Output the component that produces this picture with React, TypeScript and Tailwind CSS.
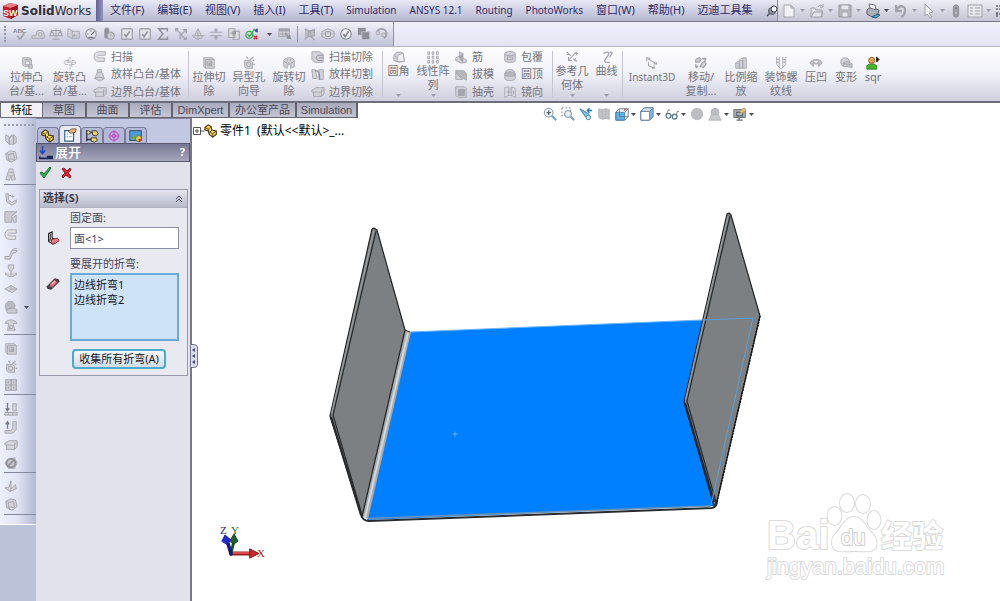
import React from "react";

type Glyph = React.ReactNode;

const G = "#a3a4ab";
const F = "#d2d2d8";

const glyphs: Record<string, Glyph> = {
  abc: (
    <>
      <text x="0" y="6.500" fontSize="7" fontFamily="Liberation Sans" fontWeight="bold" fill="#85868e" stroke="none">ABC</text>
      <path d="M5 10l3 4 5-7" strokeWidth="2" />
    </>
  ),
  tape: <><path d="M1 13h14v-5a4 4 0 0 0-4-4H9a3 3 0 0 0-3 3v3H1z" fill={F} /><circle cx="10.500" cy="8.500" r="2" /></>,
  scale: <path d="M8 2v12M3 4h10M1 10l2-6 3 6H1zM10 10l3-6 2 6h-5zM4 14h8" strokeWidth="1.300" />,
  section: <><path d="M1 2l5 2v9l-5-2zM6 5h8v8H6" fill={F} /><path d="M9 8l-2 2 2 2M7 10h5" /></>,
  gauge: <><circle cx="8" cy="8" r="6" fill="#e4e4ec" strokeWidth="1.500" /><path d="M8 9l4-4M4 8h1M8 4v1M5 12h6" strokeWidth="1.500" stroke="#777983" /></>,
  sensor: <><rect x="3" y="1" width="5" height="12" rx="2" fill="#8f9098" /><circle cx="10" cy="10" r="4" fill={F} strokeWidth="1.500" /><path d="M10 8v2h2" /></>,
  checkbox: <><rect x="2" y="2" width="12" height="12" rx="1" fill="#e4e4ea" strokeWidth="1.500" /><path d="M5 8l2 3 4-6" strokeWidth="2" stroke="#93959d" /></>,
  sigma: <path d="M13 5V2H3l5 6-5 6h10v-3" strokeWidth="1.700" stroke="#8f9099" />,
  branch: <path d="M2 2l5 5v7M14 3L7 10M10 3h4v4M2 5V2h3M8 9l5 5M11 14h3v-3" strokeWidth="1.500" />,
  cone: <path d="M8 2L3 12l5 2 5-2zM8 2v12M1 10h14" fill={F} />,
  align: <path d="M1 6h14M1 10h14M8 1v4M6 3l2 2 2-2M8 15v-4M6 13l2-2 2 2" strokeWidth="1.300" />,
  copy: <><path d="M2 2h7v10H2zM7 5h7v9H7z" fill="#dedee4" strokeWidth="1.300" /><path d="M4 7h6M8 5l2 2-2 2" stroke="#83858d" /></>,
  table: <><path d="M1 2h12v9H1z" fill={F} /><path d="M1 3.500h12" strokeWidth="3" /><path d="M1 8h12M5 5v6M9 5v6" /><path d="M8 7l6 6M13 9l1 4-4-1" strokeWidth="1.500" stroke="#8c8d96" /></>,
  greencheck: (
    <>
      <circle cx="5" cy="9" r="4" stroke="#35ad4b" strokeWidth="1.500" />
      <path d="M3 8l2 3 6-9" stroke="#35ad4b" strokeWidth="1.500" />
      <path d="M11 4l3-2v4z" fill="#3947a5" stroke="#3947a5" />
      <path d="M10 10l4 4M14 10l-4 4" stroke="#dc2c47" strokeWidth="1.800" />
    </>
  ),
  flow: <><path d="M2 2l4 2v7l-4 3M6 5l7-2v7l-7 1M9 5v6l4 4" fill="#bcbdc4" strokeWidth="1.400" /></>,
  eye: <><path d="M1 5l7-3 7 3v6l-7 3-7-3z" fill="#d5d6dd" /><circle cx="8" cy="8" r="3" strokeWidth="1.300" /><path d="M1 8h3M12 8h3" /></>,
  okcircle: <><circle cx="8" cy="8" r="6" fill="#ececf2" strokeWidth="1.300" stroke="#85868e" /><path d="M5 8l2 3 4-6" strokeWidth="2" stroke="#85868e" /></>,
  squares: <><path d="M1 1h9v8H1z" fill="#8d8e97" stroke="none" /><path d="M5.500 5.500h9v9h-9z" fill="#8d8e97" stroke="#c5c6d0" /></>,
  swirl: <><path d="M2 6c2-5 9-5 11 0 1 3 0 5-3 7" strokeWidth="2" /><path d="M1 6l3-2 2 4-4 1zM8 7h4v4H8z" fill={F} /></>,
  extrude: <><path d="M3 2h8l2 2v8H5L3 10z" fill={F} /><path d="M5 4h8M6 6h5v4H6z" fill="#eee" /><path d="M10 10h4v4h-4z" fill="#cfcfd5" /></>,
  revolve: <><path d="M8 1v14" strokeDasharray="3 1" /><path d="M6 5C0 5 0 10 6 10M10 5c6 0 6 5 0 5M6 3v4M10 8v4M4 7h3M9 7h4" /></>,
  sweep: <path d="M14 2H6C-1 3 0 13 6 13h7V9H7C4 9 4 6 7 6h7z" fill="#e2e2e6" />,
  loft: <path d="M5 2h5v3l3 7-5 3-6-3 3-7zM5 5h5M2 12c3-2 7-2 11 0" fill={F} />,
  boundary: <path d="M1 6l5-3h9v7l-3 3H3V8H1zM3 8h9V5M12 8v5M12 8l3-3" fill={F} />,
  cut: <><path d="M2 2h10l2 2v10H4l-2-2z" fill={F} /><path d="M4 4h10M4 4v10M6 6h5v5H6z" /><path d="M8 8h3v3H8z" fill="#aaa" /></>,
  hole: <><path d="M3 5h7l2 2v7H5l-2-2z" fill={F} /><circle cx="7.500" cy="9.500" r="2.500" /><path d="M9 5l4-4M12 5h2M5 1l2 2M13 9l2 1" strokeWidth="1.500" /></>,
  revcut: <><path d="M2 5c2-4 10-4 12 0v7l-4 2v-4H6v4l-4-2z" fill={F} /><path d="M2 6c3 3 9 3 12 0M6 6V3M10 6V3" /></>,
  sweepcut: <><path d="M1 2h9l4 3v9H4l-3-3z" fill={F} /><path d="M14 6H9C5 6 5 12 9 12h4M14 9H9" stroke="#8c8d95" /></>,
  loftcut: <><path d="M1 2h4l2 10H2zM9 2h5v11H9z" fill={F} /><path d="M5 3c4 0 5 3 5 10" stroke="#888992" strokeWidth="1.500" /></>,
  fillet: <><path d="M2 12V7c1-5 8-6 11-3l1 9-6 1z" fill={F} /><path d="M6 13V9c1-4 5-5 7-5l1 9z" fill="#f1f1f4" /><path d="M6 9L3 6" /></>,
  pattern: <path d="M2 2h2v3H2zM7 2h2v3H7zM12 2h2v3h-2zM2 7h2v3H2zM7 7h2v3H7zM12 7h2v3h-2zM2 12h2v3H2zM7 12h2v3H7zM12 12h2v3h-2z" fill="#e9e9ee" />,
  rib: <><path d="M6 2l4 2v5l4 2v3l-6 1-6-3V9l4-2z" fill={F} /><path d="M6 8l4 6V4z" fill="#a5a6ac" /></>,
  draft: <><path d="M2 3h9l3 3v8L2 6z" fill="#b6b7bd" /><path d="M2 6v7h8z" fill={F} /></>,
  shell: <><path d="M2 2h10l2 2v10H4l-2-2z" fill={F} /><rect x="5" y="5" width="7" height="7" fill="#a5a6ad" /></>,
  wrap: <><path d="M2 4c0-3 12-3 12 0v8c0 3-12 3-12 0z" fill={F} /><path d="M2 5c2 2 10 2 12 0M5 8h6v3H5z" /></>,
  dome: <><path d="M2 7c0-7 12-7 12 0v5c0 3-12 3-12 0z" fill={F} /><ellipse cx="8" cy="7" rx="6" ry="2.500" fill="#b6b7be" /></>,
  mirror: <path d="M2 3l4-1v10l-4 2zM10 2l4 2v10l-4-2zM6 12h4M8 2v8M4 8h4M12 6v5" fill="#e1e1e6" />,
  refgeo: <path d="M2 2l5 5M2 6l2-2M13 2L4 12M4 8v4h4M9 10l5 3M12 9l-1 4M11 4h4M13 2v4" strokeWidth="1.200" />,
  curve: <path d="M4 4c6-4 8 0 3 5-3 4-2 6 4 5M11 3c4-2 3 2 0 5" strokeWidth="1.500" />,
  instant: <path d="M2 6V2l4 1M3 3l10 6v-2M13 9h-3M4 7v4l7 3M11 14l-1-3M11 14l-3 0" strokeWidth="1.200" />,
  move: <path d="M2 4l4-2 2 2-2 3H2zM9 8l3-2 2 3-3 4-4-1zM9 3h4v3M12 2l2 2M2 9v3h3M2 14l2-2" fill={F} strokeWidth="1.300" />,
  scalebox: <path d="M2 8h4v6H2zM6 5h4v9H6zM10 2h4v12h-4zM2 8l2-2h2M6 5l2-2h2" fill={F} />,
  thread: <path d="M3 1v9M6 1v12M10 1v12M13 1v9M3 10l5 5 5-5M3 4h3M10 4h3M3 7h3M10 7h3" />,
  indent: <path d="M1 8c2-5 12-6 14 0l-4 4v-3H5v3zM5 6l3 3 3-3" fill="#bfc0c6" />,
  deform: <><circle cx="7" cy="7" r="5" fill={F} /><path d="M5 12V8l5-2 5 3v4zM5 8l5 2 5-1" fill="#c4c5cb" /></>,
  person: <><path d="M1 15V11l3-2h5l3 2v4z" fill="#46b52c" stroke="#2a7c20" /><circle cx="6.500" cy="5" r="3.500" fill="#e9a24c" stroke="#8a5b24" /><path d="M12 1l3 3-3 3z" fill="#222" stroke="#222" /></>,
  page: <path d="M3 2h7l3 3v9H3zM10 2v3h3" fill="#f2f2f7" />,
  open: <path d="M2 14V5h4l1 2h6v7zM2 14l3-5h9l-2 5M9 4c2-3 4-2 5 0M14 1v3h-3" fill="#e2e2ea" />,
  save: <><path d="M2 2h12v12H2z" fill="#b8b9c2" stroke="#93949e" /><path d="M4 2h8v5H4zM5 9h6v5H5z" fill="#e6e6ed" /></>,
  print: <><path d="M2 7l4-3 8 3-1 4-6 3-5-3z" fill="#aeb1ba" stroke="#53596a" /><path d="M4 1l6 1 1 5-6-2z" fill="#fff" stroke="#656e85" /><path d="M7 14l4 1 4-3-3-1z" fill="#55aaca" stroke="#235f87" /></>,
  undo: <path d="M3 2v6h6M3 7c4-6 10-4 9 1 0 3-2 5-4 6" strokeWidth="2.300" />,
  cursor: <path d="M4 1l8 8-4 1 3 4-2 1-3-4-2 2z" fill="#eee" />,
  light: <><rect x="5" y="1" width="6" height="14" rx="3" fill="#9b9ca5" stroke="#888a94" /><circle cx="8" cy="5" r="1.500" fill="#777983" /><circle cx="8" cy="10" r="1.500" fill="#c5c6cd" /></>,
  list: <><rect x="1" y="2" width="14" height="12" fill="#e8e8ef" /><path d="M3 5h3M3 8h3M3 11h3M8 5h5M8 8h5M8 11h5" /></>,
  zoomfit: <><path d="M10 10l5 5" stroke="#7aa6d6" strokeWidth="2.500" /><circle cx="6.500" cy="6.500" r="5" fill="#edf4f8" stroke="#7c8794" /><path d="M4 6.500h5M6.500 4v5" stroke="#546070" strokeWidth="1.500" /></>,
  zoomarea: <><path d="M1 1h10v9H1z" strokeDasharray="2 2" stroke="#727a87" /><path d="M11 11l4 4" stroke="#7aa6d6" strokeWidth="2.500" /><circle cx="8" cy="8" r="4" fill="#e6eff5" stroke="#77828f" /></>,
  prevview: <><path d="M1 2l7 10 4 2 1-3-3-4z" fill="#7bc3e8" stroke="#39729c" /><path d="M15 4H10M12 1.500L9.500 4 12 6.500" stroke="#1e7cb9" strokeWidth="1.500" /><circle cx="10.500" cy="12" r="2.500" fill="#d3f1fd" stroke="#4b88aa" /></>,
  sectionv: <path d="M2 2l4 1 4-1 4 1v11l-4-1-4 1-4-2zM6 3v11M10 2v11" fill="#c2c3c8" stroke="#b0b1b7" />,
  orient: <><path d="M1 6l4-4h10v9l-4 4H1z" fill="#fff" stroke="#5c6877" /><path d="M1 6h10v9H1z" fill="#5fb2e6" stroke="#467da2" /><path d="M11 6l4-4M5 2v4M5 6v5h6M11 11h4" stroke="#69727e" /><path d="M10 4l3-2" stroke="#b35b62" strokeWidth="1.500" /></>,
  cube: <><path d="M1 5l4-4h10v10l-4 4H1z" fill="#81b9e7" stroke="#506f9f" /><path d="M1 5l4-4h10l-4 4z" fill="#d7ebfb" stroke="#607796" /><path d="M1 5h10v10H1z" fill="#fff" stroke="#647790" /></>,
  glasses: <><circle cx="4" cy="10" r="2.700" stroke="#5e7f90" strokeWidth="1.500" /><circle cx="11" cy="11" r="2.700" stroke="#5e7f90" strokeWidth="1.500" /><path d="M2 8l2-5 2 1M13 9l1-4 2 0M6.500 10h2" stroke="#637782" /></>,
  ball: <circle cx="8" cy="8" r="6.500" fill="#bdbec2" stroke="#b5b6ba" />,
  scene: <><circle cx="8" cy="6" r="4.500" fill="#bdbec2" stroke="#b0b1b7" /><path d="M1 15l3-6h8l3 6z" fill="#c8c9cd" stroke="#b0b1b7" /></>,
  monitor: <><rect x="1" y="3" width="13" height="9" fill="#aeb9b7" stroke="#606467" /><path d="M4 6h7v4H4zM4 15h7M7 12v3" stroke="#686d72" strokeWidth="1.500" /><path d="M7 5l6-4 2 3-5 3z" fill="#eac181" stroke="#b8935e" /></>,
  part: <><path d="M1 4l4-3 3 2 1 4 5 1v4l-4 3-4-3-1-4-4-1z" fill="#ffd956" stroke="#3e3518" strokeWidth="1.300" /><path d="M1 4l4 2 3-3M5 6v3M9 7l-2 2M10 11l4-3M10 11v4M6 9l4 2" stroke="#493d19" /></>,
  props: <><path d="M2 3h10v12H2z" fill="#fff" stroke="#326384" strokeWidth="1.300" /><path d="M4 7h2M4 10h2M7 10h3" stroke="#5c9dc0" /><path d="M6 4l4-3h5l-1 4-5 1z" fill="#f0b36c" stroke="#775027" /></>,
  config: <><path d="M2 1v13M2 4h6M2 12h6" stroke="#333" strokeWidth="1.500" /><circle cx="4" cy="4" r="2" fill="#dfd9ac" stroke="#4f4828" /><path d="M8 2h5l2 3-2 3-4-1zM7 10h6l1 3-3 2-4-1z" fill="#ead069" stroke="#3c3827" /></>,
  target: <><circle cx="8" cy="8" r="5" stroke="#c44fc8" strokeWidth="1.500" /><circle cx="8" cy="8" r="2" stroke="#ba3fbd" /><path d="M8 1v14M1 8h14" stroke="#c856cb" strokeWidth="1.300" /></>,
  picture: <><rect x="1" y="2" width="13" height="11" fill="#4f9dd8" stroke="#273e57" /><path d="M2 11l4-4 3 3v2H2z" fill="#5faf52" stroke="none" /><circle cx="11" cy="11" r="3.500" fill="#e5d149" stroke="#5b6337" /><path d="M11 11h3.500a3.500 3.500 0 0 1-3.500 3.500z" fill="#cf3434" stroke="none" /></>,
  unfold: <><path d="M4 0v8M1 5l3 4 3-4" stroke="#2242b5" strokeWidth="1.700" /><path d="M1 12v2h14v-2h-5v2" stroke="#182757" strokeWidth="2" /></>,
  face: <><path d="M3 3l4-2v7l5 2v3l-4 2-5-3z" fill="#f4f4f4" stroke="#222" strokeWidth="1.300" /><path d="M3 4v7M5 3v7l-2 1M5 10l3 3" stroke="#222" /><path d="M6 10l7-2 2 3-6 4-3-2z" fill="#e77c85" stroke="#9d2734" /></>,
  bend: <><path d="M1 11l9-9 4 1 1 2-9 9-4-1z" fill="#46474f" stroke="#25262b" /><path d="M4 8l6-5 3 3-6 6-2-1z" fill="#e47580" stroke="#863740" /><path d="M7 8l3-3" stroke="#f6c0c5" strokeWidth="1.500" /></>,
  bend1: <path d="M2 3l4 3v8l-4-4zM6 8l3-5 2 5v6l-5 0zM11 3l3 3v6l-3 2z" fill={F} />,
  bend2: <path d="M2 4l5-3 6 1 2 8-6 4-6-3zM5 5l6-1 1 7-7-1zM7 14l-2-4M5 5L2 4" fill={F} />,
  bend3: <path d="M6 1h4l3 12-4 1-1-4-2 4-4-1zM6 5h4M5 9h6" fill={F} />,
  flange: <path d="M2 2h3v7l4 3 5-3v3l-5 3-6-4zM5 4h3M10 3v4M8 5h4" fill={F} />,
  miter: <><path d="M1 2h14L9 7v7H1z" fill="#c9c9cf" /><path d="M10 9l4-3v8h-3z" fill={F} /></>,
  jog: <path d="M1 12h5l3-7h6l-2 3h-3l-3 7H1zM9 5l2-2h4" fill={F} />,
  sketchb: <path d="M5 1h6v4L8 9 5 5zM8 9v4M2 10c0 6 12 6 12 0M2 10v3M14 10v3" fill={F} />,
  cross: <path d="M1 8l7-4 7 4-6 4zM8 4v4l-3 3M8 8h7" fill={F} />,
  form: <><circle cx="7" cy="7" r="5.500" fill="#b9bac0" /><path d="M2 11l8-2 5 2v4H4z" fill="#c9cad0" /></>,
  vent: <path d="M1 6c2-5 12-5 14 0H11v3l2 5H4l1-5V6zM6 9h4v3H6z" fill={F} />,
  grid: <><path d="M2 2h12v12H2z" fill={F} strokeWidth="1.400" /><path d="M2 8h12M8 2v12" strokeWidth="1.400" /><path d="M4 5h2M10 5h2M4 11h2M10 11h2M5 4v2M11 4v2M5 10v2M11 10v2" /></>,
  foldd: <><path d="M4 1v8M2 7l2 3 2-3" stroke="#777982" strokeWidth="1.500" /><path d="M1 12h14v3H1zM10 2h4v8h-4zM5 12v3M10 12v3" fill={F} /></>,
  foldu: <><path d="M4 10V2M2 5l2-3 2 3" stroke="#777982" strokeWidth="1.500" /><path d="M1 12h7l2-3V2h4v9l-4 4H1z" fill={F} /></>,
  nobend: <><path d="M1 8l3-4 8-2 3 6-3 6H5z" fill="#c4c5cb" /><circle cx="8" cy="8" r="5" strokeWidth="1.800" stroke="#8f9098" /><path d="M5 11l6-6" stroke="#8f9098" strokeWidth="1.800" /></>,
  rip: <path d="M1 9l6 4 7-3-1-5-5 5V1L6 8zM7 13l1-3" fill={F} />,
};

function Icon({ name, className = "size-3.5" }: { name: string; className?: string }) {
  return (
    <svg viewBox="0 0 16 16" className={`shrink-0 ${className}`} fill="none" stroke={G} strokeWidth="1" aria-hidden="true">
      {glyphs[name]}
    </svg>
  );
}

function Arrow({ dark = false, className = "" }: { dark?: boolean; className?: string }) {
  return (
    <svg viewBox="0 0 5 3" className={`h-[3px] w-[5px] shrink-0 ${className}`} aria-hidden="true">
      <path d="M0 0h5L2.500 3z" fill={dark ? "#4b4c58" : "#9a9aa8"} />
    </svg>
  );
}

const menus = ["文件(F)", "编辑(E)", "视图(V)", "插入(I)", "工具(T)", "Simulation", "ANSYS 12.1", "Routing", "PhotoWorks", "窗口(W)", "帮助(H)", "迈迪工具集"];

function TitleBar() {
  return (
    <header className="flex h-[22px] items-stretch border-b border-[#777886] bg-gradient-to-b from-[#eeeef6] to-[#c5c5d4]">
      <div className="flex w-24 items-center gap-0.5 bg-gradient-to-b from-[#f3f3fa] to-[#c9c9dc] pl-0.5">
        <svg viewBox="0 0 17 17" className="size-[17px] shrink-0" aria-hidden="true">
          <path d="M1 4l7-3 8 2v10l-7 4-8-3z" fill="#c3202b" />
          <path d="M1 4l7-3 8 2-7 3z" fill="#ea7b7f" />
          <path d="M9 6l7-3v10l-7 4z" fill="#98131d" />
          <text x="1" y="13.500" fontFamily="Liberation Sans" fontSize="9" fontWeight="bold" fill="#fff">SW</text>
        </svg>
        <div className="font-['DejaVu_Sans',sans-serif] text-[12px] text-[#303038]"><b>Solid</b>Works</div>
      </div>
      <div className="w-[7px] bg-gradient-to-r from-[#62629a] to-[#9494b8]" />
      <nav className="flex w-[675px] items-center gap-[13px] border-r border-[#8a8a9a] bg-gradient-to-b from-[#e8e8f5] via-[#cfcfe4] to-[#b7b7ce] pl-[7px] text-[11px] text-[#2c2c66]">
        {menus.map((m) => (
          <button key={m} type="button" className={/^[A-Z]/.test(m) ? "text-[10px] whitespace-nowrap" : "whitespace-nowrap"}>{m}</button>
        ))}
        <svg viewBox="0 0 12 12" className="size-3 shrink-0" aria-hidden="true">
          <path d="M1 11l4-4" stroke="#444655" strokeWidth="1.500" />
          <circle cx="6" cy="6" r="3.500" fill="#8f909e" stroke="#555766" />
          <circle cx="8" cy="4" r="3" fill="#f5f5fa" stroke="#444655" />
        </svg>
      </nav>
      <div className="flex flex-1 items-center overflow-hidden pl-[3px]">
        {["page", "open", "save", "print", "undo", "cursor"].map((n) => (
          <button key={n} type="button" aria-label={n} className="flex w-7 shrink-0 items-center gap-[3px]">
            <Icon name={n} className="size-4" />
            <Arrow dark={n === "print"} />
          </button>
        ))}
        <button type="button" aria-label="light" className="w-[18px] shrink-0"><Icon name="light" /></button>
        <button type="button" aria-label="list" className="flex w-7 shrink-0 items-center gap-[3px]"><Icon name="list" className="size-4" /><Arrow /></button>
        <svg viewBox="0 0 8 16" className="h-4 w-2 shrink-0" aria-hidden="true"><path d="M1 3h7M1 6h7M2 9v5M5 9l3 5M1 11h4" stroke="#333" fill="none" strokeDasharray="2 1" /></svg>
      </div>
    </header>
  );
}

const quickA = ["abc", "tape", "scale", "section", "gauge", "sensor", "checkbox", "checkbox", "sigma", "branch", "cone", "align", "copy", "greencheck"];
const quickB = ["flow", "eye", "okcircle", "squares", "swirl"];

function ToolStrip() {
  return (
    <div className="flex h-[25px] items-stretch border-b border-[#b3b3c4] bg-gradient-to-b from-[#f0f0fa] to-[#e3e3f2]">
      <div className="flex w-[394px] items-center border-r border-[#8e8fa4] bg-gradient-to-b from-[#f2f2fb] via-[#d9d9e9] to-[#bfc1d6] pl-1">
        <div className="h-4 border-l-2 border-dotted border-[#9697ab]" />
        <div className="ml-[7px] flex w-[246px] justify-between">
          {quickA.map((n, i) => <button key={i} type="button" aria-label={n} className="w-3.5"><Icon name={n} /></button>)}
        </div>
        <Arrow dark className="ml-2" />
        <button type="button" aria-label="table" className="ml-1.5"><Icon name="table" /></button>
        <div className="mx-[5px] h-4 w-px bg-[#8f90a0]" />
        <div className="flex w-[86px] justify-between">
          {quickB.map((n) => <button key={n} type="button" aria-label={n} className="w-3.5"><Icon name={n} /></button>)}
        </div>
      </div>
    </div>
  );
}

function Big({ icon, lines, w, arrow = false, top = false }: { icon: string; lines: string[]; w: string; arrow?: boolean; top?: boolean }) {
  return (
    <button type="button" className={`relative flex h-full shrink-0 flex-col items-center leading-[14px] ${top ? "pt-[3px]" : "pt-[9px]"} ${w}`}>
      <Icon name={icon} />
      {lines.map((l) => <span key={l} className={/^[A-Z]/.test(l) ? "text-[10px] whitespace-nowrap" : "whitespace-nowrap"}>{l}</span>)}
      {arrow && <Arrow className="absolute bottom-1" />}
    </button>
  );
}

function Stack({ items, w }: { items: [string, string][]; w: string }) {
  return (
    <div className={`flex shrink-0 flex-col pt-px pl-0.5 ${w}`}>
      {items.map(([icon, label]) => (
        <button key={label} type="button" className="flex h-[18px] items-center gap-1 whitespace-nowrap">
          <Icon name={icon} />{label}
        </button>
      ))}
    </div>
  );
}

const Rule = () => <div className="my-1 w-px shrink-0 bg-[#c5c5d2]" />;

function Ribbon() {
  return (
    <div className="flex h-14 items-stretch border-b-2 border-[#6d6d7c] bg-gradient-to-b from-[#fefeff] via-[#f1f1f9] to-[#cfcfde] pl-[5px] text-[11px] text-[#73747c]">
      <Big icon="extrude" lines={["拉伸凸", "台/基..."]} w="w-[43px]" />
      <Big icon="revolve" lines={["旋转凸", "台/基..."]} w="w-[43px]" />
      <Stack items={[["sweep", "扫描"], ["loft", "放样凸台/基体"], ["boundary", "边界凸台/基体"]]} w="w-[97px]" />
      <Rule />
      <Big icon="cut" lines={["拉伸切", "除"]} w="w-10" />
      <Big icon="hole" lines={["异型孔", "向导"]} w="w-10" />
      <Big icon="revcut" lines={["旋转切", "除"]} w="w-10" />
      <Stack items={[["sweepcut", "扫描切除"], ["loftcut", "放样切割"], ["boundary", "边界切除"]]} w="w-[73px]" />
      <Rule />
      <Big icon="fillet" lines={["圆角"]} w="w-[31px]" arrow top />
      <Big icon="pattern" lines={["线性阵", "列"]} w="w-[38px]" arrow top />
      <Stack items={[["rib", "筋"], ["draft", "拔模"], ["shell", "抽壳"]]} w="w-[49px]" />
      <Stack items={[["wrap", "包覆"], ["dome", "圆顶"], ["mirror", "镜向"]]} w="w-[51px]" />
      <Rule />
      <Big icon="refgeo" lines={["参考几", "何体"]} w="w-[38px]" arrow top />
      <Big icon="curve" lines={["曲线"]} w="w-[31px]" arrow top />
      <Rule />
      <Big icon="instant" lines={["Instant3D"]} w="w-[58px]" />
      <Big icon="move" lines={["移动/", "复制..."]} w="w-10" />
      <Big icon="scalebox" lines={["比例缩", "放"]} w="w-10" />
      <Big icon="thread" lines={["装饰螺", "纹线"]} w="w-10" />
      <Big icon="indent" lines={["压凹"]} w="w-[30px]" />
      <Big icon="deform" lines={["变形"]} w="w-[30px]" />
      <Big icon="person" lines={["sqr"]} w="w-6" />
    </div>
  );
}

const tabs: [string, string][] = [
  ["草图", "w-[44px]"], ["曲面", "w-[43px]"], ["评估", "w-[43px]"], ["DimXpert", "w-[57px]"], ["办公室产品", "w-[67px]"], ["Simulation", "w-[61px]"],
];
const views: [string, boolean][] = [
  ["zoomfit", false], ["zoomarea", false], ["prevview", false], ["sectionv", false], ["orient", true], ["cube", true], ["glasses", true], ["ball", false], ["scene", true], ["monitor", true],
];

function TabRow() {
  return (
    <div className="flex h-[15px] items-start">
      <div role="tablist" className="flex h-[15px] font-['Liberation_Sans','Noto_Sans_CJK_SC',sans-serif] text-[11px] leading-[13px] text-[#4a4a55]">
        <button role="tab" type="button" aria-selected="true" className="w-[43px] border-x border-b border-[#6d6d7c] bg-[#f1f1f7] text-black">特征</button>
        {tabs.map(([t, w]) => (
          <button key={t} role="tab" type="button" aria-selected="false" className={`border-r-2 border-b border-[#62636f] bg-gradient-to-b from-[#a9abbe] to-[#c5c6d4] whitespace-nowrap ${w}`}>{t}</button>
        ))}
      </div>
      <div className="mt-1 ml-[185px] flex gap-1">
        {views.map(([n, a]) => (
          <button key={n} type="button" aria-label={n} className="flex items-center gap-0.5">
            <Icon name={n} />{a && <Arrow dark />}
          </button>
        ))}
      </div>
    </div>
  );
}

const sideGroups = [
  ["bend1", "bend2", "bend3"],
  ["flange", "miter", "sweep", "jog", "sketchb", "cross", "form", "vent"],
  ["cut", "hole", "grid"],
  ["foldd", "foldu", "boundary", "nobend"],
  ["rip", "bend2"],
];

function SideStrip() {
  return (
    <div className="w-9 shrink-0 bg-[#bcc2d8]">
      <div className="border-b border-white bg-gradient-to-r from-[#edf0fd] via-[#dfe3f4] to-[#b3b9d1] pt-1.5 pb-1 pl-1">
        <div className="mb-1 w-[30px] border-t-2 border-dotted border-[#9a9cb2]" />
        {sideGroups.map((g, i) => (
          <div key={i} className="mb-[5px] border-b border-[#85889d]">
            {g.map((n, j) => (
              <button key={j} type="button" aria-label={n} className="flex h-[18px] w-full items-center gap-1.5">
                <Icon name={n} />{n === "form" && <Arrow dark />}
              </button>
            ))}
          </div>
        ))}
      </div>
    </div>
  );
}

function PropertyPanel() {
  return (
    <aside className="relative w-[156px] shrink-0 border-t border-r-2 border-t-[#8788a0] border-r-[#77788a] bg-[#e2e2ed] text-[11px] text-[#45465c]">
      <div className="flex h-6 items-end bg-[#c3c8e2] pl-px">
        {["part", "props", "config", "target", "picture"].map((n) => (
          <button key={n} type="button" aria-label={n} className={`flex w-[22px] items-center justify-center rounded-t border border-b-0 border-[#777b99] ${n === "props" ? "h-[18px] bg-[#e9eaf4]" : "h-4 bg-[#b3b9d6]"}`}>
            <Icon name={n} />
          </button>
        ))}
      </div>
      <div className="flex h-[19px] items-center border border-[#57586e] bg-gradient-to-b from-[#777893] to-[#a5a6bc] pr-1 pl-0.5 text-white">
        <Icon name="unfold" />
        <span className="ml-0.5 flex-1 text-[13px] font-medium">展开</span>
        <button type="button" aria-label="帮助" className="font-bold">?</button>
      </div>
      <div className="flex h-[27px] items-start gap-2 pt-1 pl-[3px]">
        <button type="button" aria-label="确定">
          <svg viewBox="0 0 13 13" className="size-[13px]"><path d="M1 7l2-1 2 2 6-7 1 1-7 10z" fill="#32b24a" stroke="#18722b" /></svg>
        </button>
        <button type="button" aria-label="取消">
          <svg viewBox="0 0 13 13" className="size-[13px]"><path d="M2 3l2-1 3 3 3-3 1 2-3 3 3 3-1 2-4-3-3 3-1-2 3-3z" fill="#dd2432" stroke="#8c1c27" /></svg>
        </button>
      </div>
      <section className="mr-0.5 ml-[3px] border border-[#989aab] bg-[#e9e9f2] pb-1.5">
        <h2 className="flex h-[18px] items-center justify-between border-b border-[#b1b2c1] bg-gradient-to-b from-[#e5e5ee] to-[#b7bac9] pr-1 pl-[3px] font-bold text-[#3b3c4e]">
          选择(S)
          <svg viewBox="0 0 8 8" className="size-2" aria-hidden="true"><path d="M1 4l3-3 3 3M1 7l3-3 3 3" fill="none" stroke="#454657" /></svg>
        </h2>
        <div className="pt-px pr-2 pl-[30px]">
          <label htmlFor="fixed" className="flex h-[18px] items-center">固定面:</label>
          <div className="-ml-6 flex items-center gap-2.5">
            <Icon name="face" />
            <input id="fixed" defaultValue="面<1>" className="h-[22px] w-full min-w-0 border border-[#8e90a4] bg-white px-[3px] text-[11px]" />
          </div>
          <label htmlFor="bends" className="mt-1.5 flex h-[18px] items-center">要展开的折弯:</label>
          <div className="-ml-6 flex items-start gap-2.5">
            <Icon name="bend" className="mt-1 size-3.5" />
            <select id="bends" multiple size={4} className="h-[68px] w-full min-w-0 appearance-none overflow-hidden border-2 border-[#67acd9] bg-[#cfe3f8] bg-none p-0 pt-px text-[11px] text-[#16171f] outline-none">
              <option className="h-[15px] min-h-0 px-0.5 py-0 leading-[15px]">边线折弯1</option>
              <option className="h-[15px] min-h-0 px-0.5 py-0 leading-[15px]">边线折弯2</option>
            </select>
          </div>
          <button type="button" className="mt-2 ml-0.5 flex h-5 w-[94px] items-center justify-center rounded-sm border-2 border-[#4eaac6] bg-gradient-to-b from-[#f4f8fb] to-[#cfdde8] whitespace-nowrap text-[#16171f]">收集所有折弯(A)</button>
        </div>
      </section>
      <button type="button" aria-label="折叠面板" className="absolute top-[225px] -right-[8px] z-10 h-6 w-2 rounded-r border border-[#77788c] bg-[#d9daea]">
        <svg viewBox="0 0 6 22" className="h-[22px] w-1.5" aria-hidden="true"><path d="M4 3v4L1 5zM4 9v4l-3-2zM4 15v4l-3-2z" fill="#45467a" /></svg>
      </button>
    </aside>
  );
}

function Model() {
  return (
    <svg viewBox="192 118 808 483" className="block h-[483px] w-[808px]" role="img" aria-label="钣金零件">
      <path d="M410 332L753 318L713 506L367 520z" fill="#0080ff" />
      <path d="M410 332L702 320" stroke="#69b5f5" />
      <path d="M405 330L411 332L368 519L362 516z" fill="#a8abad" />
      <path d="M408 333L365 518" stroke="#d5d7d8" strokeWidth="2" />
      <path d="M405 330l5 2" stroke="#333" />
      <path d="M372 229L374 228L377 230L405 330L362 517L330 416z" fill="#7d8082" stroke="#222426" strokeWidth="1.200" strokeLinejoin="round" />
      <path d="M376 231L333 415L362 515" fill="none" stroke="#26292b" strokeWidth="1.200" />
      <path d="M374 230L331.500 414" stroke="#999da0" strokeWidth="1.300" />
      <path d="M331 417L361 515" stroke="#27292b" strokeWidth="2.200" />
      <path d="M361 515Q363 521 369 521L712 508Q717 507 717 501" fill="none" stroke="#292c2f" strokeWidth="2" />
      <path d="M368 518.500L711 506" stroke="#6b92b7" strokeWidth="1.500" />
      <path d="M727 214L729 213L731 215L760 316L717 501L714 506L684 402z" fill="#7d8082" stroke="#222426" strokeWidth="1.200" strokeLinejoin="round" />
      <path d="M730 216L687 401L716 502" fill="none" stroke="#26292b" strokeWidth="1.200" />
      <path d="M728 216L685.500 400" stroke="#999da0" strokeWidth="1.300" />
      <path d="M685 403L714 502" stroke="#27292b" strokeWidth="2.200" />
      <path d="M760 316L717 502" stroke="#111" strokeWidth="1.500" strokeDasharray="2 1" />
      <path d="M702 320L753 318L711 505" fill="none" stroke="#5a9fd8" />
      <path d="M452.500 434h5M455 431.500v5" stroke="#65b4ff" />

      <g strokeLinecap="round">
        <path d="M231 553.500h20" stroke="#8e2020" strokeWidth="4" />
        <path d="M232 553h18" stroke="#e04848" strokeWidth="2" />
        <path d="M250 549l9 4.500-9 4.500z" fill="#c5292c" stroke="#7c1b1d" />
        <path d="M231 553l3-12" stroke="#174f20" strokeWidth="3" />
        <path d="M230 541l4-7 4 7-4 3z" fill="#19642a" stroke="#123f1b" />
        <path d="M231 554l-4-14" stroke="#151587" strokeWidth="3.500" />
        <path d="M222 541l3-6 6 5-4 4z" fill="#2129d2" stroke="#1a1a9c" />
      </g>
      <g fontFamily="Liberation Serif" fontSize="11">
        <text x="220" y="534" fill="#26266e">Z</text>
        <text x="231" y="534" fill="#2c6b38">Y</text>
        <text x="257" y="557" fill="#9e2525">X</text>
      </g>

      <g fill="#fff" stroke="#dadada" strokeWidth="2" paintOrder="stroke" strokeLinejoin="round">
        <text x="767" y="549" fontFamily="Liberation Sans" fontWeight="bold" fontSize="40">Bai</text>
        <ellipse cx="834.500" cy="516" rx="7" ry="9" />
        <ellipse cx="847" cy="503" rx="7" ry="9" />
        <ellipse cx="863" cy="504" rx="7" ry="9" />
        <ellipse cx="874" cy="520" rx="6.500" ry="9" />
        <path d="M854 517c-8 0-12 9-16 14-5 5-8 10-5 16 3 6 11 4 21 4s19 2 22-4c2-6-1-11-6-16-5-5-8-14-16-14z" />
        <text x="841" y="545" fontFamily="Liberation Sans" fontSize="22" stroke="#cecece">du</text>
        <text x="881" y="547" fontFamily="Noto Sans CJK SC" fontWeight="bold" fontSize="31">经验</text>
        <text x="767" y="574" fontFamily="Liberation Sans" fontSize="22">jingyan.baidu.com</text>
      </g>
    </svg>
  );
}

export default function App() {
  return (
    <div className="flex min-h-screen flex-col overflow-hidden bg-white font-['Noto_Sans','Noto_Sans_CJK_SC',sans-serif]">
      <TitleBar />
      <ToolStrip />
      <Ribbon />
      <TabRow />
      <main className="flex flex-1 items-stretch">
        <SideStrip />
        <PropertyPanel />
        <div className="relative flex-1 overflow-hidden">
          <div className="absolute top-1 left-px flex items-center text-[12px] text-black">
            <svg viewBox="0 0 11 8" className="h-2 w-[11px]" aria-hidden="true"><path d="M.5.5h7v7h-7zM2 4h4M4 2v4M8 4h3" fill="none" stroke="#555" /></svg>
            <Icon name="part" />
            <span className="ml-0.5 whitespace-pre">零件1  (默认&lt;&lt;默认&gt;_...</span>
          </div>
          <Model />
        </div>
      </main>
    </div>
  );
}
